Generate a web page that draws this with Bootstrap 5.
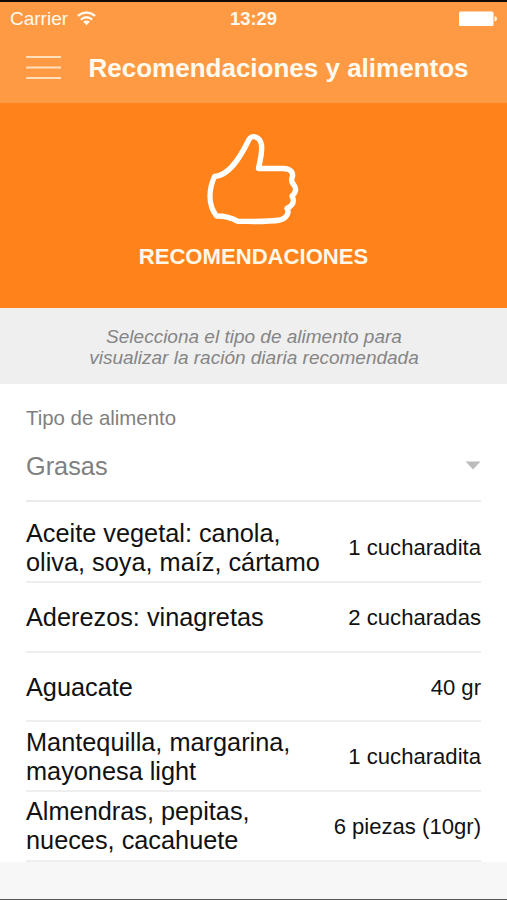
<!DOCTYPE html>
<html lang="es">
<head>
<meta charset="utf-8">
<meta name="viewport" content="width=device-width, initial-scale=1">
<title>Recomendaciones y alimentos</title>
<link href="https://cdn.jsdelivr.net/npm/bootstrap@5.3.0/dist/css/bootstrap.min.css" rel="stylesheet">
<style>
body{font-family:"Liberation Sans",Arial,sans-serif;height:900px;overflow:hidden;color:#111}
.screen{height:900px;border-top:2px solid #160b04;border-bottom:1px solid #555}
.top-area{height:101px;background:#ff9a44;color:#fffaf0}
.status{height:33px;padding:0 10px;font-size:19px;line-height:33px}
.status > *{flex:1 1 0}
.clock{font-size:18.4px}
.title-bar{height:68px;padding:0 0 3px 26px;gap:26.5px}
.title-bar h1{font-size:26px;line-height:30px;padding-top:1px}
.hero{height:205px;background:#ff821b;color:#fff8e8;padding-top:29px}
.hero h2{font-size:22.1px;line-height:26px;margin-top:12px}
.hint{height:76px;background:#efefef;color:#858585;font-size:19px;line-height:21.5px;padding:2px 0 0 1px}
.content{height:478px;padding:0 26px}
.field-label{font-size:20.4px;line-height:24px;padding-top:22px;color:#808080}
.picker{height:72px;font-size:25.3px;color:#808080;border-bottom:2px solid #ebebeb}
.picker span{padding-top:4px}
.foods{padding-top:11.6px}
.foods li{height:69.6px;padding-top:1px;border-bottom:2px solid #eeeeee;font-size:25.3px;line-height:29px}
.amount{font-size:22.1px}
.foot{flex:1;background:#f7f7f7}
</style>
<script src="https://cdn.jsdelivr.net/npm/bootstrap@5.3.0/dist/js/bootstrap.bundle.min.js"></script>
</head>
<body>
<div class="screen d-flex flex-column">
  <header class="top-area">
    <div class="status d-flex align-items-center">
      <div class="d-flex align-items-center">Carrier
        <svg class="ms-2" width="21" height="16" viewBox="0 0 21 16" fill="none" stroke="#fffaf0" stroke-width="2.3"><path d="M1.800 4.800Q10.500-1.800 19.200 4.800M4.800 8.600Q10.500 4 16.200 8.600"/><path d="M7.200 10.800Q10.500 8.200 13.800 10.800L10.500 14.200Z" fill="#fffaf0" stroke="none"/></svg>
      </div>
      <div class="clock fw-bold text-center">13:29</div>
      <div class="d-flex justify-content-end">
        <svg width="38" height="16" viewBox="0 0 38 16" fill="#fff"><rect x="0" y="0.500" width="34.500" height="14.500" rx="1.500"/><path d="M35.600 5Q38 5.500 38 7.700T35.600 10.500Z"/></svg>
      </div>
    </div>
    <div class="title-bar d-flex align-items-center">
      <svg width="36" height="26" viewBox="0 0 36 26" stroke="#ffe0bb" stroke-width="2"><path d="M0 2H35M0 12.500H35M0 23H35"/></svg>
      <h1 class="mb-0 fw-bold text-nowrap">Recomendaciones y alimentos</h1>
    </div>
  </header>
  <section class="hero d-flex flex-column align-items-center">
    <svg width="130" height="100" viewBox="0 0 130 100" fill="none" stroke="#fff" stroke-width="5.400" stroke-linejoin="round"><path d="M25.500 45.500C39 45 50 29 60 8.500C62.500 3.500 71 5 72.500 14C73.500 22 71 29 69.500 37.500H94C102 37.500 105 42 103 47C102 50 102.500 51.500 105 54C108 58 106.500 62 103 65C105.500 70 104.500 74 98 77.500C101 82 97 87.500 91 89C78 91.200 63 90.300 49 90.300C43 87 37 84.800 27.500 85C18.500 73 20 58 25.500 45.500Z" transform="translate(0 -1)"/></svg>
    <h2 class="mb-0 fw-bold">RECOMENDACIONES</h2>
  </section>
  <section class="hint d-flex align-items-center justify-content-center text-center fst-italic">
    <div>Selecciona el tipo de alimento para<br>visualizar la ración diaria recomendada</div>
  </section>
  <main class="content">
    <div class="field-label">Tipo de alimento</div>
    <div class="picker d-flex align-items-center justify-content-between">
      <span>Grasas</span>
      <svg width="16" height="9" viewBox="0 0 16 9" fill="#bcbcbc"><path d="M0.500 0.500H15.500L8 8.500Z"/></svg>
    </div>
    <ul class="foods list-unstyled mb-0">
      <li class="d-flex align-items-center justify-content-between"><span>Aceite vegetal: canola,<br>oliva, soya, maíz, cártamo</span><span class="amount">1 cucharadita</span></li>
      <li class="d-flex align-items-center justify-content-between"><span>Aderezos: vinagretas</span><span class="amount">2 cucharadas</span></li>
      <li class="d-flex align-items-center justify-content-between"><span>Aguacate</span><span class="amount">40 gr</span></li>
      <li class="d-flex align-items-center justify-content-between"><span>Mantequilla, margarina,<br>mayonesa light</span><span class="amount">1 cucharadita</span></li>
      <li class="d-flex align-items-center justify-content-between"><span>Almendras, pepitas,<br>nueces, cacahuete</span><span class="amount">6 piezas (10gr)</span></li>
    </ul>
  </main>
  <footer class="foot"></footer>
</div>
</body>
</html>
